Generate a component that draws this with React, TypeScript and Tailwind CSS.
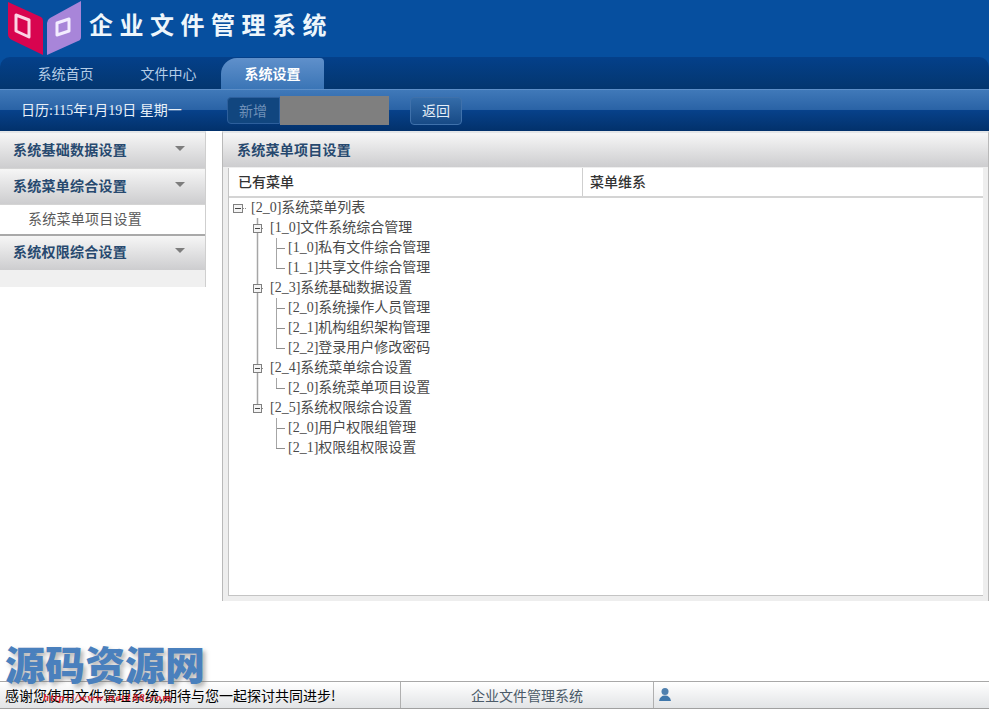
import React from "react";

const cjk = "font-['Liberation_Serif','Noto_Sans_CJK_SC',serif]";
const sans = "font-['Noto_Sans_CJK_SC','Liberation_Sans',sans-serif]";

type Cell = "root" | "node" | "last" | "pipe" | "tee" | "ell" | "blank";

// one piece of the tree connector, a 20px high drawing
const TreeCell: React.FC<{ type: Cell; width: number }> = ({ type, width }) => {
  const line = "#a6a6a6";
  const dots = "#8f8f8f";
  return (
    <svg width={width} height={20} className="shrink-0">
      {type === "pipe" && <line x1="8.5" y1="0" x2="8.5" y2="20" stroke={line} strokeWidth="1.5" />}
      {type === "tee" && (
        <>
          <line x1="4.5" y1="0" x2="4.5" y2="20" stroke={line} />
          <line x1="5" y1="10.5" x2="13" y2="10.5" stroke={dots} />
        </>
      )}
      {type === "ell" && (
        <>
          <line x1="4.5" y1="0" x2="4.5" y2="10" stroke={line} />
          <line x1="4" y1="10.5" x2="13" y2="10.5" stroke={dots} />
        </>
      )}
      {(type === "node" || type === "last") && (
        <>
          <line x1="8.5" y1="0" x2="8.5" y2={type === "last" ? 7 : 20} stroke={line} strokeWidth="1.5" />
          <rect x="4.5" y="6.5" width="8" height="8" fill="#f4f4f4" stroke="#808080" />
          <line x1="6" y1="10.5" x2="11" y2="10.5" stroke="#444" />
          <line x1="13" y1="10.5" x2="15" y2="10.5" stroke={dots} strokeDasharray="1 1" />
        </>
      )}
      {type === "root" && (
        <>
          <rect x="4.5" y="6.5" width="9" height="8" fill="#f4f4f4" stroke="#808080" />
          <line x1="6" y1="10.5" x2="12" y2="10.5" stroke="#444" />
          <line x1="14" y1="10.5" x2="17" y2="10.5" stroke={dots} strokeDasharray="1 1" />
        </>
      )}
    </svg>
  );
};

const TreeRow: React.FC<{ cells: [Cell, number][]; text: string }> = ({ cells, text }) => (
  <div className="flex h-5 items-center">
    {cells.map(([type, width], i) => (
      <TreeCell key={i} type={type} width={width} />
    ))}
    <span className="text-[14px] leading-5 text-[#4a4a4a] whitespace-nowrap">{text}</span>
  </div>
);

const tree: { cells: [Cell, number][]; text: string }[] = [
  { cells: [["root", 22]], text: "[2_0]系统菜单列表" },
  { cells: [["blank", 20], ["node", 21]], text: "[1_0]文件系统综合管理" },
  { cells: [["blank", 20], ["pipe", 23], ["tee", 16]], text: "[1_0]私有文件综合管理" },
  { cells: [["blank", 20], ["pipe", 23], ["ell", 16]], text: "[1_1]共享文件综合管理" },
  { cells: [["blank", 20], ["node", 21]], text: "[2_3]系统基础数据设置" },
  { cells: [["blank", 20], ["pipe", 23], ["tee", 16]], text: "[2_0]系统操作人员管理" },
  { cells: [["blank", 20], ["pipe", 23], ["tee", 16]], text: "[2_1]机构组织架构管理" },
  { cells: [["blank", 20], ["pipe", 23], ["ell", 16]], text: "[2_2]登录用户修改密码" },
  { cells: [["blank", 20], ["node", 21]], text: "[2_4]系统菜单综合设置" },
  { cells: [["blank", 20], ["pipe", 23], ["ell", 16]], text: "[2_0]系统菜单项目设置" },
  { cells: [["blank", 20], ["last", 21]], text: "[2_5]系统权限综合设置" },
  { cells: [["blank", 20], ["blank", 23], ["tee", 16]], text: "[2_0]用户权限组管理" },
  { cells: [["blank", 20], ["blank", 23], ["ell", 16]], text: "[2_1]权限组权限设置" },
];

const SideHeader: React.FC<{ title: string; topLine?: boolean }> = ({ title, topLine }) => (
  <div
    className={`flex h-9 items-center justify-between bg-gradient-to-b from-[#f6f6f6] to-[#cdcdcf] pl-[13px] pr-[20px] ${
      topLine ? "border-t-2 border-[#a9a9a9] pb-[3px]" : "border-b border-[#d4d4d4] pb-[2px]"
    }`}
  >
    <span className="text-[14px] font-bold tracking-[0.25px] text-[#27496f]">{title}</span>
    <span className="mb-[2px] h-0 w-0 border-x-[5px] border-t-[5px] border-x-transparent border-t-[#7d7d7d]" />
  </div>
);

const Logo: React.FC = () => (
  <svg width="82" height="56" viewBox="0 0 82 56" className="shrink-0">
    <path d="M8 2 L41 17 Q43 18 43 21 L43 55 L12 40 Q8 38 8 34 Z" fill="#d8044f" />
    <path d="M47 23 Q47 20 50 18 L81 1 L81 37 Q81 40 78 41 L47 55 Z" fill="#a885d9" />
    <path d="M16 15 L29 20 L29 37 L16 31 Z" fill="none" stroke="#fbd4e4" strokeWidth="3" strokeLinejoin="round" />
    <path d="M57 23 L69 19 L69 31 L57 35 Z" fill="none" stroke="#f3ecff" strokeWidth="3" strokeLinejoin="round" />
  </svg>
);

export default function App() {
  return (
    <div className={`relative flex h-[709px] w-[989px] flex-col overflow-hidden bg-white ${sans}`}>
      {/* header */}
      <div className="flex h-[57px] items-start bg-[#064f9f]">
        <Logo />
        <h1 className="ml-[7px] mt-[10px] text-[24px] leading-[28px] font-bold tracking-[6.5px] whitespace-nowrap text-[#eef6fb]">
          企业文件管理系统
        </h1>
      </div>

      {/* tabs */}
      <div className="bg-[#064f9f]">
        <div className="flex h-[32px] items-end rounded-t-[10px] bg-gradient-to-b from-[#04408a] to-[#03366f] pl-[15px]">
          <div className="flex h-[31px] w-[103px] items-center justify-center pb-[1px] pr-[2px] text-[14px] text-[#b4cce6]">系统首页</div>
          <div className="flex h-[31px] w-[103px] items-center justify-center pb-[1px] pr-[2px] text-[14px] text-[#b4cce6]">文件中心</div>
          <div className="flex h-[31px] w-[103px] items-center justify-center rounded-tl-[16px] rounded-tr-[4px] bg-gradient-to-b from-[#5f90cb] to-[#3a75b6] pb-[1px] text-[14px] font-bold text-white">
            系统设置
          </div>
        </div>
      </div>

      {/* toolbar */}
      <div className="flex h-[42px] items-center border-t border-[#5d8fc8] bg-[linear-gradient(to_bottom,#4079b9_0%,#2a63a6_48%,#07418a_50%,#02316b_100%)] pl-[21px]">
        <span className={`w-[206px] text-[14px] text-[#e8f0f8] ${cjk}`}>日历:115年1月19日 星期一</span>
        <div className="flex h-[27px] w-[53px] items-center rounded-l-[4px] border border-[#2d5f9c] bg-[#11467f] pb-[1px] pl-[11px] text-[14px] text-[#6f90b8]">
          新增
        </div>
        <div className="h-[29px] w-[109px] bg-[#7f7f7f]" />
        <div className="ml-[21px] flex h-[28px] w-[52px] items-center justify-center rounded-[4px] border border-[#3f71ab] bg-gradient-to-b from-[#346ca9] to-[#174a86] pb-[1px] text-[14px] text-[#e6eef7]">
          返回
        </div>
      </div>

      <div className="flex h-[470px]">
        {/* sidebar */}
        <aside className="w-[206px] shrink-0 self-start border-r border-t-2 border-r-[#cfcfcf] border-t-[#e4e6e8]">
          <SideHeader title="系统基础数据设置" />
          <SideHeader title="系统菜单综合设置" />
          <div className="flex h-[29px] items-center bg-white pb-[2px] pl-[28px] text-[14px] tracking-[0.25px] text-[#5a5a5a]">系统菜单项目设置</div>
          <SideHeader title="系统权限综合设置" topLine />
          <div className="h-[17px] bg-[#f0f0f0]" />
        </aside>

        {/* main panel */}
        <main className="ml-[16px] flex flex-1 flex-col border-x border-t-2 border-x-[#b9b9b9] border-t-[#e4e6e8]">
          <div className="flex h-[34px] shrink-0 items-center bg-gradient-to-b from-[#f7f7f7] to-[#cdcdcf] pb-[2px] pl-[14px] text-[14px] font-bold tracking-[0.25px] text-[#27496f]">
            系统菜单项目设置
          </div>
          <div className="flex min-h-0 flex-1 flex-col bg-[#eeeeee] px-[5px] pb-[5px] pt-[1px]">
            <div className="flex min-h-0 flex-1 flex-col border-b border-l border-[#c4c4c4] bg-white">
              <div className="flex h-[30px] shrink-0 items-center border-b-2 border-[#d4d4d4] text-[14px] font-medium text-[#333]">
                <div className="flex h-full w-[354px] items-center border-r border-[#cfcfcf] pb-[2px] pl-[9px]">已有菜单</div>
                <div className="pb-[2px] pl-[7px]">菜单维系</div>
              </div>
              <div className={`flex-1 ${cjk}`}>
                {tree.map((row) => (
                  <TreeRow key={row.text} cells={row.cells} text={row.text} />
                ))}
              </div>
            </div>
          </div>
        </main>
      </div>

      <div className="flex-1" />

      {/* footer */}
      <footer className="flex h-[28px] shrink-0 border-y border-t-[#a8a8a8] border-b-[#a0a0a0] bg-gradient-to-b from-white to-[#e2e4e6] text-[14px]">
        <div className="flex w-[401px] items-center border-r border-[#b0b0b0] pl-[5px] text-black">
          感谢您使用文件管理系统,期待与您一起探讨共同进步!
        </div>
        <div className="flex w-[253px] items-center justify-center border-r border-[#b0b0b0] text-[#4b5a68]">企业文件管理系统</div>
        <div className="flex items-center pl-[4px]">
          <svg width="14" height="16" viewBox="0 0 14 16">
            <circle cx="7" cy="4.5" r="3.5" fill="#4f80ae" />
            <path d="M1 14 Q2 8.5 7 8.5 Q12 8.5 13 14 Z" fill="#3f77ab" />
          </svg>
        </div>
      </footer>

      {/* site watermark over the page */}
      <div className="pointer-events-none absolute left-[5px] top-[639px] text-[40px] leading-[48px] font-black text-[#4a80bd] [text-shadow:3px_3px_4px_rgba(110,110,110,0.5)] whitespace-nowrap">
        源码资源网
      </div>
      <div className="pointer-events-none absolute left-[43px] top-[690px] font-['Liberation_Serif',serif] text-[11px] font-bold italic leading-[14px] tracking-[1.2px] text-[#d8202a]">
        http://www.net188.com
      </div>
    </div>
  );
}
